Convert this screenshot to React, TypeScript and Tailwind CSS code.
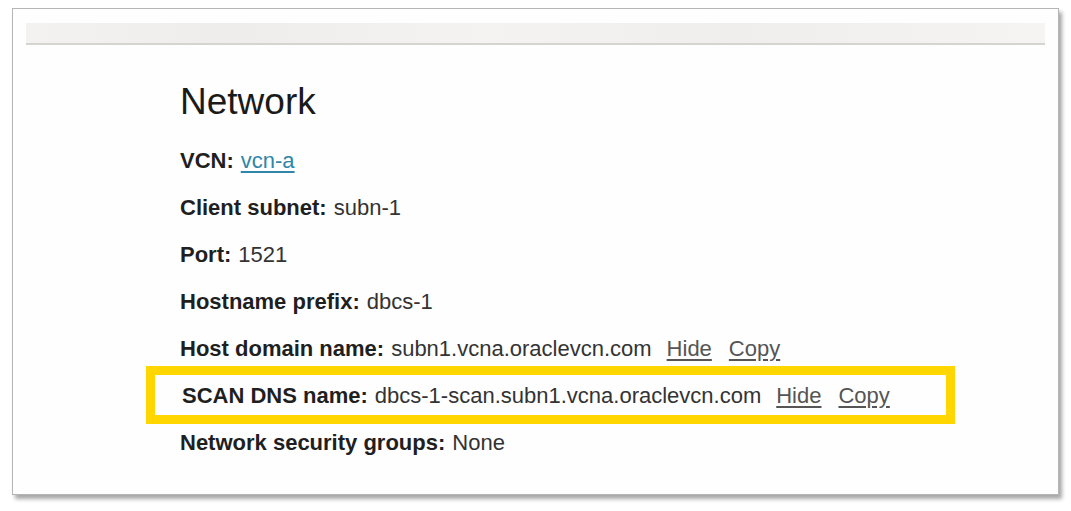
import React from 'react';

type Row = {
  label: string;
  value: string;
  link?: boolean;
  actions?: boolean;
  highlight?: boolean;
};

const rows: Row[] = [
  { label: 'VCN:', value: 'vcn-a', link: true },
  { label: 'Client subnet:', value: 'subn-1' },
  { label: 'Port:', value: '1521' },
  { label: 'Hostname prefix:', value: 'dbcs-1' },
  { label: 'Host domain name:', value: 'subn1.vcna.oraclevcn.com', actions: true },
  { label: 'SCAN DNS name:', value: 'dbcs-1-scan.subn1.vcna.oraclevcn.com', actions: true, highlight: true },
  { label: 'Network security groups:', value: 'None' },
];

function InfoRow({ row }: { row: Row }) {
  return (
    <div className={`relative flex h-[47px] items-center ${row.highlight ? 'pl-[2px]' : ''}`}>
      {/* yellow callout drawn over the row */}
      {row.highlight && (
        <span className="pointer-events-none absolute left-[-34px] top-[-6px] h-[58px] w-[809px] border-[9px] border-[#ffd600]" />
      )}
      <span className="font-bold text-[#1f1f1f]">{row.label}</span>
      <span className="ml-[7px] text-[#333333]">
        {row.link ? (
          <a href="#" className="text-[#2f86a8] underline underline-offset-[3px]">
            {row.value}
          </a>
        ) : (
          row.value
        )}
      </span>
      {row.actions && (
        <>
          <a href="#" className="ml-[15px] text-[#555555] underline underline-offset-[3px]">
            Hide
          </a>
          <a href="#" className="ml-[17px] text-[#555555] underline underline-offset-[3px]">
            Copy
          </a>
        </>
      )}
    </div>
  );
}

export default function App() {
  return (
    <div className="h-[511px] w-[1071px] bg-white pl-[12px] pt-[8px] font-['Liberation_Sans',Arial,sans-serif]">
      <div className="h-[487px] w-[1047px] border border-[#b5b5b5] bg-[#fefefe] shadow-[3px_4px_4px_rgba(0,0,0,0.35)]">
        {/* textured header strip */}
        <div className="mx-[13px] mt-[14px] h-[22px] border-b-2 border-[#d6d4d0] bg-[linear-gradient(90deg,#f3f2f0,#eeedeb_20%,#f4f3f1_45%,#efeeec_70%,#f5f4f2)]" />
        <div className="pl-[167px] pt-[35px]">
          <h1 className="h-[44px] text-[37px] leading-[44px] text-[#1a1a1a]">Network</h1>
          <div className="mt-[13px] flex flex-col text-[22px]">
            {rows.map((row) => (
              <InfoRow key={row.label} row={row} />
            ))}
          </div>
        </div>
      </div>
    </div>
  );
}
